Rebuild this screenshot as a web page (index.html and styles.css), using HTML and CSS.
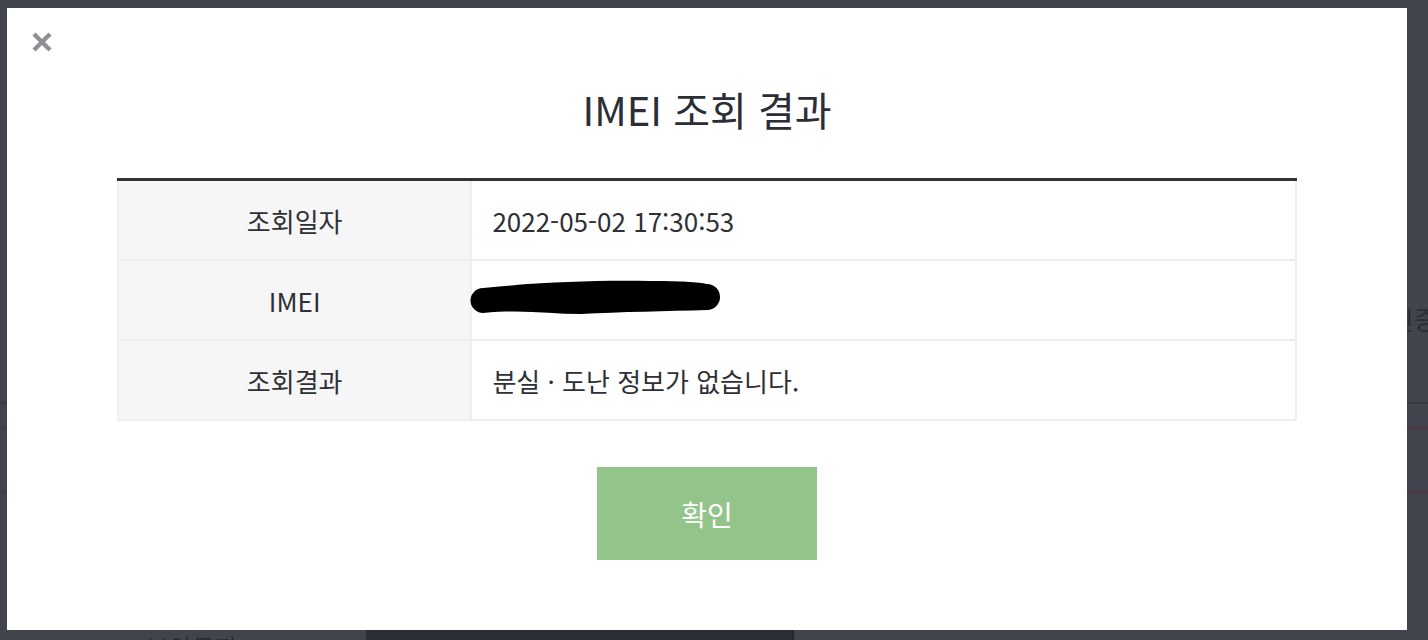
FILE: index.html
```
<!DOCTYPE html>
<html lang="ko">
<head>
<meta charset="utf-8">
<title>IMEI 조회 결과</title>
<link rel="stylesheet" href="styles.css">
</head>
<body>
<div class="page">
  <div class="auth-row"><span class="auth-title">본인인증</span></div>
  <div class="rule"></div>
  <div class="rule-red first"></div>
  <div class="rule-red second"></div>
  <div class="captcha-row">
    <div class="captcha-label">보안문자</div>
    <div class="captcha-img"></div>
    <div class="captcha-value">388425</div>
  </div>
</div>

<div class="modal">
  <button class="close" aria-label="닫기">
    <svg width="22" height="22" viewBox="0 0 22 22"><path d="M3 3L19 19M19 3L3 19" stroke="#8f9095" stroke-width="4.4" fill="none"/></svg>
  </button>
  <h2 class="modal-title">IMEI 조회 결과</h2>
  <table class="result">
    <tr>
      <th>조회일자</th>
      <td>2022-05-02 17:30:53</td>
    </tr>
    <tr>
      <th>IMEI</th>
      <td class="redacted-cell">
        <svg class="redact" width="254" height="38" viewBox="0 0 254 38"><path d="M14 9 C60 4 120 1 180 2 C210 2 230 3 238 5 A13 13 0 0 1 238 31 C200 32 150 33 112 35 C80 35 50 30 14 34 A12.5 12.5 0 0 1 14 9 Z" fill="#000"/></svg>
      </td>
    </tr>
    <tr>
      <th>조회결과</th>
      <td>분실 · 도난 정보가 없습니다.</td>
    </tr>
  </table>
  <div class="actions">
    <button class="confirm">확인</button>
  </div>
</div>
</body>
</html>
```
FILE: styles.css
```
html, body {
  margin: 0;
  padding: 0;
}
body {
  background: #41444d;
  font-family: "Noto Sans CJK KR", "Noto Sans", sans-serif;
  overflow: hidden;
  height: 640px;
}

/* underlying page (seen through the dim overlay) */
.page {
  padding-top: 300px;
}
.auth-row {
  height: 38px;
  padding-left: 1342px;
  white-space: nowrap;
  overflow: hidden;
}
.auth-title {
  font-size: 26px;
  line-height: 38px;
  color: #2c2e36;
}
.rule {
  margin-top: 64px;
  height: 2px;
  background: #383a42;
}
.rule-red {
  height: 3px;
  background: #4a3b43;
}
.rule-red.first { margin-top: 23px; }
.rule-red.second { margin-top: 61px; }
.captcha-row {
  margin-top: 133px;
  display: grid;
  grid-template-columns: 366px 426px 2px 1fr;
  height: 60px;
}
.captcha-label {
  padding-left: 146px;
  padding-top: 2px;
  font-size: 25px;
  color: #2a2c33;
}
.captcha-img {
  background: #2c2e35;
}
.captcha-value {
  grid-column: 4;
  padding-left: 40px;
  padding-top: 2px;
  font-size: 26px;
  color: #2e3038;
  border-left: 2px solid #26282e;
  margin-left: -2px;
}

/* modal */
.modal {
  position: fixed;
  left: 7px;
  top: 8px;
  width: 1400px;
  box-sizing: border-box;
  background: #fff;
  padding: 75px 110px 70px;
}
.close {
  position: absolute;
  left: 24px;
  top: 23px;
  width: 22px;
  height: 22px;
  padding: 0;
  border: 0;
  background: none;
  cursor: pointer;
}
.close svg { display: block; }
.modal-title {
  margin: 0;
  height: 52px;
  line-height: 52px;
  text-align: center;
  font-size: 40px;
  font-weight: 400;
  color: #2b2e36;
}
.result {
  margin-top: 43px;
  width: 100%;
  border-collapse: collapse;
  border-top: 3px solid #333333;
}
.result th,
.result td {
  height: 78px;
  padding: 0;
  border: 2px solid #eeeeee;
  font-size: 26px;
  font-weight: 400;
  color: #2f3036;
}
.result tr:first-child th,
.result tr:first-child td {
  border-top: 3px solid #333333;
}
.result th {
  width: 30%;
  background: #f6f6f6;
  text-align: center;
}
.result td {
  text-align: left;
  padding-left: 20px;
}
.result td.redacted-cell {
  padding-left: 0;
}
.redact {
  display: block;
  margin-left: -3px;
  margin-top: -4px;
}
.actions {
  margin-top: 46px;
  display: flex;
  justify-content: center;
}
.confirm {
  width: 220px;
  height: 93px;
  border: 0;
  background: #93c48a;
  color: #fff;
  font-family: "Noto Sans CJK KR", "Noto Sans", sans-serif;
  font-size: 28px;
  cursor: pointer;
}
```
